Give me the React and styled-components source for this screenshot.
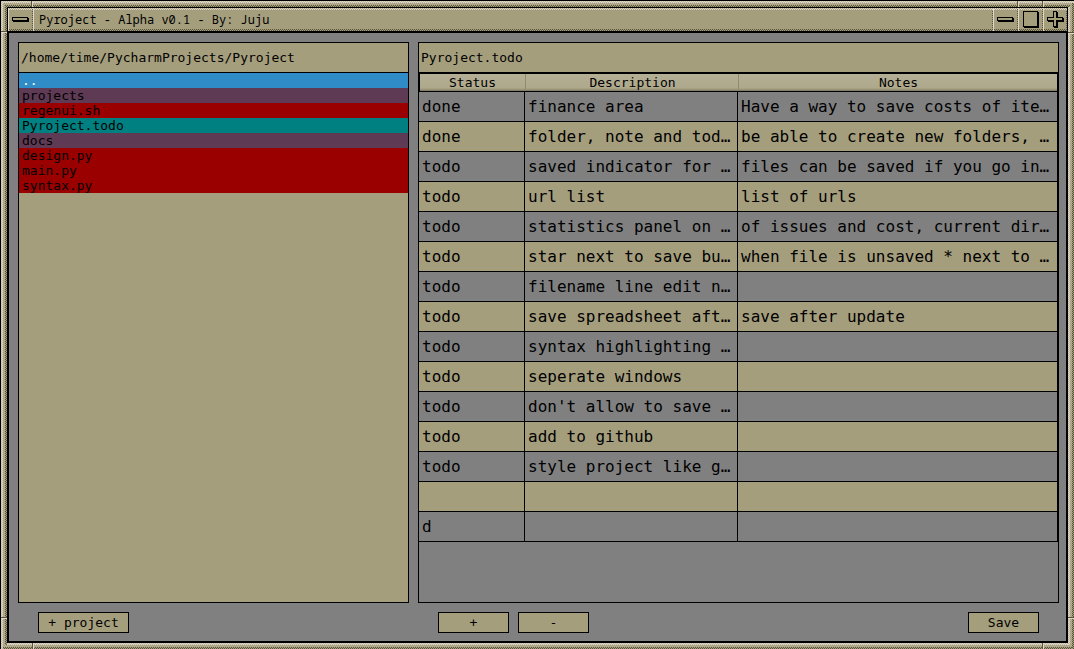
import React from "react";
import styled, { createGlobalStyle, css } from "styled-components";

const tan = "#a59e7d";
const light = "#e0d6cb";
const dark = "#5a543c";
const mono = `"DejaVu Sans Mono", "Liberation Mono", monospace`;

const dither = (a, b) =>
  `repeating-conic-gradient(${a} 0 25%, ${b} 0 50%) 0 0 / 2px 2px`;

const Global = createGlobalStyle`
  * { box-sizing: border-box; }
  body { margin: 0; background: #000; font: 13px/15px ${mono}; color: #000; }
`;

const Outer = styled.div`
  display: flex;
  min-height: 100vh;
  padding: 1px 0 0 1px;
  background: #000;
`;

const Bevel = styled.div`
  flex: 1;
  display: flex;
  min-width: 0;
  position: relative;
  padding: 6px;
  background: ${dither(tan, "#b9b298")};
`;

/* One dithered line of the frame's bevel */
const Edge = styled.i`
  position: absolute;
  background: ${(p) => p.$bg};
  ${(p) =>
    p.$side === "top" || p.$side === "bottom"
      ? css`left: ${p.$at}px; right: ${p.$at}px; height: ${p.$w}px;`
      : css`top: ${p.$at}px; bottom: ${p.$at}px; width: ${p.$w}px;`}
  ${(p) => p.$side}: ${(p) => p.$at}px;
`;

/* Grip marks that split the frame into corners and sides */
const Notch = styled.i`
  position: absolute;
  ${(p) =>
    p.$side === "top" || p.$side === "bottom"
      ? css`
          width: 2px; height: 6px;
          background: linear-gradient(90deg, ${dark} 50%, ${light} 50%);
        `
      : css`
          width: 6px; height: 2px;
          background: linear-gradient(${dark} 50%, ${light} 50%);
        `}
  ${(p) => p.$side}: 0;
  ${(p) => p.$from}: ${(p) => p.$at}px;
`;

const Window = styled.main`
  position: relative;
  flex: 1;
  min-width: 0;
  display: flex;
  flex-direction: column;
  border: 1px solid #000;
`;

const raised = css`
  background:
    linear-gradient(${light}, ${light}) 0 0 / 1px 100% no-repeat,
    linear-gradient(90deg, ${light} 50%, transparent 50%) 0 0 / 2px 1px repeat-x,
    linear-gradient(90deg, transparent 50%, ${light} 50%) 0 1px / 2px 1px repeat-x,
    linear-gradient(transparent 50%, ${dark} 50%) 100% 0 / 1px 2px repeat-y,
    linear-gradient(90deg, ${dark} 50%, transparent 50%) 0 100% / 2px 1px repeat-x,
    linear-gradient(90deg, transparent 50%, ${dark} 50%) 0 calc(100% - 1px) / 2px 1px repeat-x,
    ${tan};
`;

const TitleBar = styled.header`
  display: flex;
  height: 23px;
  background: ${tan};
`;

const FrameButton = styled.button`
  ${raised}
  flex: none;
  width: 25px;
  height: 23px;
  padding: 3px 4px;
  border: 0;
  display: flex;
  &:last-child { width: 24px; padding-right: 3px; }
`;

const Title = styled.h1`
  ${raised}
  flex: 1;
  margin: 0;
  padding: 0 6px;
  font: 12px/23px "Noto Sans Mono", "Droid Sans Mono", "Noto Sans Mono CJK SC", ${mono};
`;

const Body = styled.div`
  flex: 1;
  display: grid;
  grid-template-columns: 391fr 641fr;
  grid-template-rows: 1fr 21px;
  gap: 9px;
  padding: 9px 7px 8px 9px;
  background: #808080;
  border: 1px solid #000;
  border-top-width: 2px;
`;

const Panel = styled.section`
  min-width: 0;
  border: 1px solid #000;
  background: ${(p) => p.$bg};
`;

const PathField = styled.input`
  display: block;
  width: 100%;
  height: 30px;
  padding: 0 2px;
  border: 0;
  border-bottom: 1px solid #000;
  border-radius: 0;
  outline: 0;
  background: ${tan};
  color: #000;
  font: 13px/15px ${mono};
`;

const FileList = styled.ul`
  list-style: none;
  margin: 0;
  padding: 0;
`;

const kinds = {
  up: "#308cc6",
  dir: "#5f3a54",
  file: "#9b0000",
  open: "#008080",
};

const FileItem = styled.li`
  height: 15px;
  padding: 0 3px;
  background: ${(p) => kinds[p.$kind]};
  color: ${(p) => (p.$kind === "up" ? "#fff" : "#000")};
`;

const Table = styled.table`
  width: 100%;
  table-layout: fixed;
  border-collapse: separate;
  border-spacing: 0;
`;

const Head = styled.th`
  width: ${(p) => p.$w || "auto"};
  height: 19px;
  padding: 0;
  font: 13px/15px ${mono};
  border: solid #000;
  border-width: 1px 0;
  background: linear-gradient(#b5af96, #aea88c 80%, #a09a7e 90%, #77725a);
  &:first-child { border-left-width: 1px; }
  &:last-child { border-right-width: 1px; }
  & + & { padding-left: 2px; box-shadow: inset 1px 0 #8f8a70; }
`;

const Row = styled.tr`
  background: #808080;
  &:nth-child(even) { background: ${tan}; }
`;

const Cell = styled.td`
  height: 30px;
  padding: 0 3px;
  overflow: hidden;
  white-space: nowrap;
  font-size: 16px;
  line-height: 20px;
  border: solid #000;
  border-width: 0 1px 1px 0;
`;

const Actions = styled.div`
  display: flex;
  gap: 9px;
  padding: 0 20px;
`;

const Button = styled.button`
  width: ${(p) => (p.$wide ? 91 : 71)}px;
  height: 21px;
  padding: 0;
  border: 1px solid #000;
  border-radius: 0;
  background: ${tan};
  color: #000;
  font: 13px/15px ${mono};
  ${(p) => p.$end && "margin-left: auto;"}
`;

const Bar = () => (
  <svg width="17" height="17" shapeRendering="crispEdges">
    <path d="M1 7h16v4H1z" />
    <path d="M0 6h16v4H0z" />
    <path d="M1 7h14v2H1z" fill={tan} />
  </svg>
);
const Square = () => (
  <svg width="17" height="17" shapeRendering="crispEdges">
    <path d="M2 1h15v16H2z" />
    <path d="M1 0h15v16H1z" />
    <path d="M2 1h13v14H2z" fill={tan} />
  </svg>
);
const Plus = () => (
  <svg width="17" height="17" shapeRendering="crispEdges">
    <path d="M7 1h4v6h6v4h-6v6H7v-6H1V7h6z" />
    <path d="M6 0h4v6h6v4h-6v6H6v-6H0V6h6z" />
    <path d="M7 1h2v6h6v2H9v6H7V9H1V7h6z" fill={tan} />
  </svg>
);

const files = [
  ["..", "up"],
  ["projects", "dir"],
  ["regenui.sh", "file"],
  ["Pyroject.todo", "open"],
  ["docs", "dir"],
  ["design.py", "file"],
  ["main.py", "file"],
  ["syntax.py", "file"],
];

const rows = [
  ["done", "finance area", "Have a way to save costs of ite…"],
  ["done", "folder, note and tod…", "be able to create new folders, …"],
  ["todo", "saved indicator for …", "files can be saved if you go in…"],
  ["todo", "url list", "list of urls"],
  ["todo", "statistics panel on …", "of issues and cost, current dir…"],
  ["todo", "star next to save bu…", "when file is unsaved * next to …"],
  ["todo", "filename line edit n…", ""],
  ["todo", "save spreadsheet aft…", "save after update"],
  ["todo", "syntax highlighting …", ""],
  ["todo", "seperate windows", ""],
  ["todo", "don't allow to save …", ""],
  ["todo", "add to github", ""],
  ["todo", "style project like g…", ""],
  ["", "", ""],
  ["d", "", ""],
];

const pale = dither(light, "#c3baa2");
const shade = dither(tan, dark);

export default function App() {
  return (
    <Outer>
      <Global />
      <Bevel>
        <Edge $side="bottom" $at={0} $w={2} $bg={shade} />
        <Edge $side="right" $at={0} $w={2} $bg={shade} />
        <Edge $side="top" $at={0} $w={2} $bg={pale} />
        <Edge $side="left" $at={0} $w={2} $bg={pale} />
        <Edge $side="bottom" $at={4} $w={2} $bg={pale} />
        <Edge $side="right" $at={4} $w={2} $bg={pale} />
        <Edge $side="top" $at={4} $w={2} $bg={shade} />
        <Edge $side="left" $at={4} $w={2} $bg={shade} />
        <Notch $side="top" $from="left" $at={30} />
        <Notch $side="top" $from="right" $at={55} />
        <Notch $side="top" $from="right" $at={30} />
        <Notch $side="bottom" $from="left" $at={31} />
        <Notch $side="bottom" $from="right" $at={30} />
        <Notch $side="left" $from="top" $at={30} />
        <Notch $side="left" $from="bottom" $at={30} />
        <Notch $side="right" $from="top" $at={31} />
        <Notch $side="right" $from="bottom" $at={30} />
        <Window>
          <TitleBar>
            <FrameButton aria-label="Window menu"><Bar /></FrameButton>
            <Title>Pyroject - Alpha v0.1 - By: Juju</Title>
            <FrameButton aria-label="Minimize"><Bar /></FrameButton>
            <FrameButton aria-label="Maximize"><Square /></FrameButton>
            <FrameButton aria-label="Close"><Plus /></FrameButton>
          </TitleBar>
          <Body>
            <Panel $bg={tan}>
              <PathField aria-label="Directory" defaultValue="/home/time/PycharmProjects/Pyroject" />
              <FileList>
                {files.map(([name, kind]) => (
                  <FileItem key={name} $kind={kind}>{name}</FileItem>
                ))}
              </FileList>
            </Panel>
            <Panel $bg="#808080">
              <PathField aria-label="File name" defaultValue="Pyroject.todo" />
              <Table>
                <thead>
                  <tr>
                    <Head $w="106px">Status</Head>
                    <Head $w="213px">Description</Head>
                    <Head>Notes</Head>
                  </tr>
                </thead>
                <tbody>
                  {rows.map((r, i) => (
                    <Row key={i}>
                      {r.map((c, j) => <Cell key={j}>{c}</Cell>)}
                    </Row>
                  ))}
                </tbody>
              </Table>
            </Panel>
            <Actions>
              <Button $wide>+ project</Button>
            </Actions>
            <Actions>
              <Button>+</Button>
              <Button>-</Button>
              <Button $end>Save</Button>
            </Actions>
          </Body>
        </Window>
      </Bevel>
    </Outer>
  );
}
